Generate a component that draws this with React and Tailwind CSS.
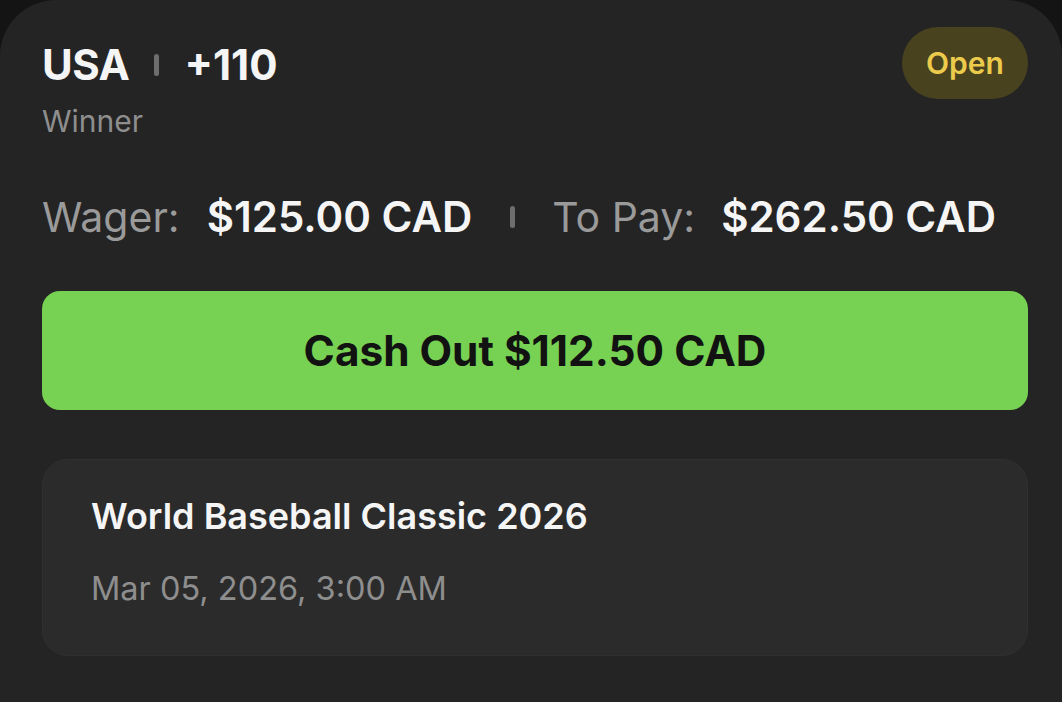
export default function App() {
  return (
    <div className="h-[702px] w-full overflow-hidden bg-[#141414]" style={{ fontFamily: 'Inter, "Noto Sans", sans-serif' }}>
      <div className="h-full rounded-t-[56px] bg-[#242424] pl-[42px] pr-[34px] pt-[27px]">
        {/* Header */}
        <div className="flex items-start justify-between">
          <div className="mt-[17px] flex flex-col">
            <div className="flex items-center gap-[25px] text-[42px] font-bold leading-none text-[#f5f5f5]">
              <span className="tracking-[-0.5px]">USA</span>
              <span className="h-[22px] w-[5px] rounded-full bg-[#6e6e6e]"></span>
              <span>+110</span>
            </div>
            <div className="mt-[20px] text-[30px] leading-none text-[#8e8e8e]">Winner</div>
          </div>
          <div className="flex h-[72px] w-[126px] items-center justify-center rounded-full bg-[#48421f] text-[30px] font-semibold text-[#eccb4c]">
            Open
          </div>
        </div>

        {/* Wager / To Pay */}
        <div className="mt-[60px] flex items-center leading-none">
          <span className="text-[41px] text-[#9a9a9a]">Wager:</span>
          <span className="ml-[27px] text-[42px] font-semibold text-[#f5f5f5]">$125.00 CAD</span>
          <span className="ml-[38px] mr-[37px] h-[22px] w-[5px] rounded-full bg-[#6e6e6e]"></span>
          <span className="text-[41px] text-[#9a9a9a]">To Pay:</span>
          <span className="ml-[26px] text-[42px] font-semibold text-[#f5f5f5]">$262.50 CAD</span>
        </div>

        {/* Cash out */}
        <button className="mt-[53px] flex h-[119px] w-full items-center justify-center rounded-[18px] bg-[#77d153] text-[42.3px] font-bold text-[#121212]">
          Cash Out $112.50 CAD
        </button>

        {/* Event */}
        <div className="mt-[49px] h-[197px] rounded-[26px] border border-[#303030] bg-[#2b2b2b] pl-[48px] pt-[38px]">
          <div className="text-[36px] font-semibold leading-none text-[#f5f5f5]">World Baseball Classic 2026</div>
          <div className="mt-[39px] text-[32.5px] leading-none text-[#8e8e8e]">Mar 05, 2026, 3:00 AM</div>
        </div>
      </div>
    </div>
  )
}
